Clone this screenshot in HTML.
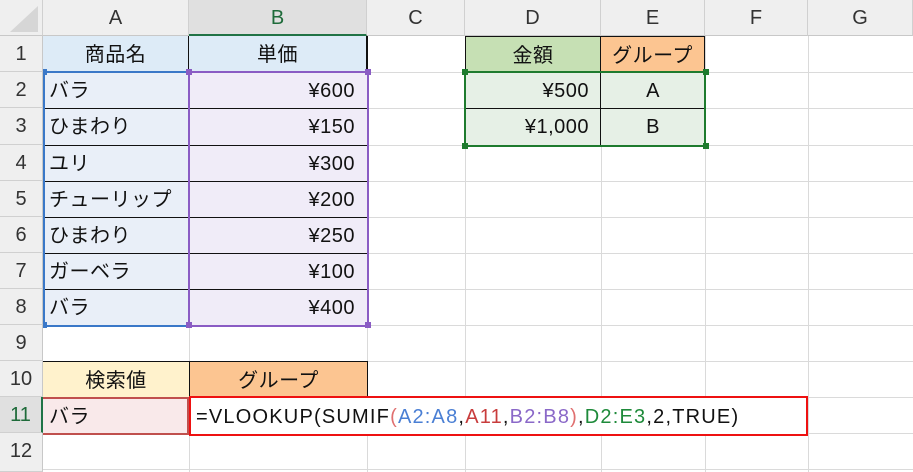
<!DOCTYPE html>
<html><head><meta charset="utf-8"><style>
body{margin:0;width:913px;height:472px;overflow:hidden;background:#fff;font-family:"Liberation Sans","Noto Sans CJK JP",sans-serif;position:relative}
div{position:absolute;box-sizing:border-box}
.v{top:0;height:472px;width:1px;background:#dadada}
.h{left:0;width:913px;height:1px;background:#dadada}
.ch{top:0;height:36px;background:#efefef;color:#333;font-size:20px;text-align:center;line-height:36px;border-right:1px solid #d0d0d0;border-bottom:1px solid #c8c8c8}
.rh{left:0;width:43px;background:#efefef;color:#333;font-size:20px;text-align:center;border-right:1px solid #c8c8c8;border-bottom:1px solid #d0d0d0}
.c{font-size:20px;line-height:1;color:#111;padding:1px 6px 0;white-space:nowrap;display:flex;align-items:center;letter-spacing:0.5px}
.l{justify-content:flex-start}.r{justify-content:flex-end;padding-right:12px}.m{justify-content:center}
.sq{width:6px;height:6px}
</style></head><body>
<div class="v" style="left:189px"></div><div class="v" style="left:367px"></div><div class="v" style="left:465px"></div><div class="v" style="left:601px"></div><div class="v" style="left:705px"></div><div class="v" style="left:808px"></div>
<div class="h" style="top:72px"></div><div class="h" style="top:108px"></div><div class="h" style="top:145px"></div><div class="h" style="top:181px"></div><div class="h" style="top:217px"></div><div class="h" style="top:253px"></div><div class="h" style="top:289px"></div><div class="h" style="top:325px"></div><div class="h" style="top:361px"></div><div class="h" style="top:397px"></div><div class="h" style="top:433px"></div><div class="h" style="top:469px"></div>

<div class="ch" style="left:0;width:43px"></div>
<div style="left:10px;top:6px;width:0;height:0;border-left:28px solid transparent;border-bottom:26px solid #d6d6d6"></div>
<div class="ch" style="left:43px;width:146px">A</div>
<div class="ch" style="left:189px;width:178px;background:#e0e0e0;color:#1e6b3a;border-bottom:2px solid #217346">B</div>
<div class="ch" style="left:367px;width:98px">C</div>
<div class="ch" style="left:465px;width:136px">D</div>
<div class="ch" style="left:601px;width:104px">E</div>
<div class="ch" style="left:705px;width:103px">F</div>
<div class="ch" style="left:808px;width:105px">G</div>

<div class="rh" style="top:36px;height:36px;line-height:36px">1</div>
<div class="rh" style="top:72px;height:36px;line-height:36px">2</div>
<div class="rh" style="top:108px;height:37px;line-height:37px">3</div>
<div class="rh" style="top:145px;height:36px;line-height:36px">4</div>
<div class="rh" style="top:181px;height:36px;line-height:36px">5</div>
<div class="rh" style="top:217px;height:36px;line-height:36px">6</div>
<div class="rh" style="top:253px;height:36px;line-height:36px">7</div>
<div class="rh" style="top:289px;height:36px;line-height:36px">8</div>
<div class="rh" style="top:325px;height:36px;line-height:36px">9</div>
<div class="rh" style="top:361px;height:36px;line-height:36px">10</div>
<div class="rh" style="top:397px;height:36px;line-height:36px;background:#e0e0e0;color:#1e6b3a;border-right:2px solid #217346">11</div>
<div class="rh" style="top:433px;height:39px;line-height:36px">12</div>

<div style="left:43px;top:36px;width:325px;height:290px;border:1px solid #111;border-left:none"></div>
<div class="c m" style="left:43px;top:36px;width:146px;height:36px;background:#ddebf7;border-right:1px solid #111">商品名</div>
<div class="c m" style="left:189px;top:36px;width:178px;height:36px;background:#ddebf7;border-right:1px solid #111">単価</div>
<div style="left:43px;top:72px;width:146px;height:253px;background:#e9eff8"></div>
<div style="left:189px;top:72px;width:178px;height:253px;background:#f0ecf8"></div>
<div class="h" style="left:43px;width:324px;top:108px;background:#111"></div>
<div class="h" style="left:43px;width:324px;top:145px;background:#111"></div>
<div class="h" style="left:43px;width:324px;top:181px;background:#111"></div>
<div class="h" style="left:43px;width:324px;top:217px;background:#111"></div>
<div class="h" style="left:43px;width:324px;top:253px;background:#111"></div>
<div class="h" style="left:43px;width:324px;top:289px;background:#111"></div>
<div class="c l" style="left:43px;top:72px;width:146px;height:36px">バラ</div>
<div class="c l" style="left:43px;top:108px;width:146px;height:37px">ひまわり</div>
<div class="c l" style="left:43px;top:145px;width:146px;height:36px">ユリ</div>
<div class="c l" style="left:43px;top:181px;width:146px;height:36px">チューリップ</div>
<div class="c l" style="left:43px;top:217px;width:146px;height:36px">ひまわり</div>
<div class="c l" style="left:43px;top:253px;width:146px;height:36px">ガーベラ</div>
<div class="c l" style="left:43px;top:289px;width:146px;height:36px">バラ</div>
<div class="c r" style="left:189px;top:72px;width:178px;height:36px">¥600</div>
<div class="c r" style="left:189px;top:108px;width:178px;height:37px">¥150</div>
<div class="c r" style="left:189px;top:145px;width:178px;height:36px">¥300</div>
<div class="c r" style="left:189px;top:181px;width:178px;height:36px">¥200</div>
<div class="c r" style="left:189px;top:217px;width:178px;height:36px">¥250</div>
<div class="c r" style="left:189px;top:253px;width:178px;height:36px">¥100</div>
<div class="c r" style="left:189px;top:289px;width:178px;height:36px">¥400</div>
<div style="left:43px;top:71px;width:147px;height:256px;border:2px solid #3a78c8;border-right:none"></div>
<div style="left:188px;top:71px;width:181px;height:256px;border:2px solid #8a5cc4"></div>
<div class="sq" style="left:43px;top:69px;width:4px;background:#3a78c8"></div>
<div class="sq" style="left:43px;top:322px;width:4px;background:#3a78c8"></div>
<div class="sq" style="left:186px;top:69px;background:#8a5cc4"></div>
<div class="sq" style="left:365px;top:69px;background:#8a5cc4"></div>
<div class="sq" style="left:186px;top:322px;background:#8a5cc4"></div>
<div class="sq" style="left:365px;top:322px;background:#8a5cc4"></div>

<div class="c m" style="left:465px;top:36px;width:136px;height:37px;background:#c6e0b4;border:1px solid #111;border-bottom:none">金額</div>
<div class="c m" style="left:600px;top:36px;width:105px;height:37px;background:#fcc591;border:1px solid #111;border-bottom:none">グループ</div>
<div style="left:465px;top:72px;width:240px;height:74px;background:#e6f0e6"></div>
<div class="h" style="left:465px;width:240px;top:108px;background:#111"></div>
<div class="v" style="left:600px;top:72px;height:74px;background:#111"></div>
<div class="c r" style="left:465px;top:72px;width:136px;height:36px">¥500</div>
<div class="c r" style="left:465px;top:108px;width:136px;height:37px">¥1,000</div>
<div class="c m" style="left:601px;top:72px;width:104px;height:36px">A</div>
<div class="c m" style="left:601px;top:108px;width:104px;height:37px">B</div>
<div style="left:464px;top:71px;width:242px;height:76px;border:2px solid #1e7b2e"></div>
<div class="sq" style="left:462px;top:69px;background:#1e7b2e"></div>
<div class="sq" style="left:703px;top:69px;background:#1e7b2e"></div>
<div class="sq" style="left:462px;top:143px;background:#1e7b2e"></div>
<div class="sq" style="left:703px;top:143px;background:#1e7b2e"></div>

<div class="c m" style="left:43px;top:361px;width:147px;height:37px;background:#fff2cc;border:1px solid #111;border-left:none;border-bottom:none">検索値</div>
<div class="c m" style="left:189px;top:361px;width:179px;height:37px;background:#fcc591;border:1px solid #111;border-bottom:none">グループ</div>
<div class="c l" style="left:43px;top:397px;width:146px;height:38px;background:#f9e9ea;border:2px solid #c0504d;border-left:none">バラ</div>
<div class="c l" style="left:189px;top:396px;width:619px;height:40px;border:2px solid #ee1111;background:#fff;padding-left:5px;letter-spacing:1.2px">=VLOOKUP(SUMIF<span style="color:#e07070">(</span><span style="color:#4a7fd4">A2:A8</span>,<span style="color:#c83c3c">A11</span>,<span style="color:#8a68c8">B2:B8</span><span style="color:#e07070">)</span>,<span style="color:#1e8a3a">D2:E3</span>,2,TRUE)</div>
</body></html>
